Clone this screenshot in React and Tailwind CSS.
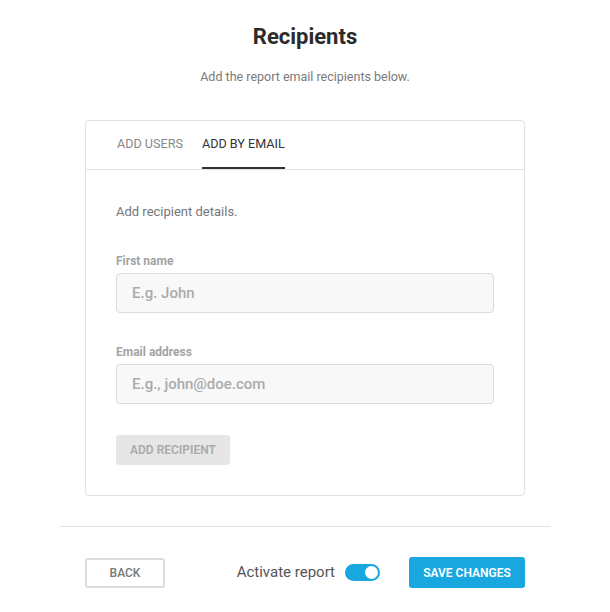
import { useState } from "react";

function Field({ label, placeholder }) {
  return (
    <div className="flex flex-col">
      <label className="text-[12px] font-bold text-[#a3a3a3] leading-none mb-[6px]">{label}</label>
      <input
        className="h-[40px] w-full rounded-[4px] border border-[#dcdcdc] bg-[#f8f8f8] px-[15px] text-[15px] font-medium text-[#555] placeholder-[#ababab] outline-none"
        placeholder={placeholder}
      />
    </div>
  );
}

export default function App() {
  const [tab, setTab] = useState("email");
  const [active, setActive] = useState(true);

  return (
    <div className="w-[610px] min-h-[612px] bg-white font-['Roboto',sans-serif] flex flex-col items-center pt-[24px]">
      <h1 className="text-[22px] font-bold text-[#2b2b2b] leading-[26px]">Recipients</h1>
      <p className="mt-[19px] text-[12.5px] text-[#7a7a7a] leading-[16px]">Add the report email recipients below.</p>

      <div className="mt-[35px] w-[440px] rounded-[4px] border border-[#e0e0e0]">
        <div className="flex gap-[19px] px-[31px] border-b border-[#e3e3e3] h-[49px]">
          <button
            onClick={() => setTab("users")}
            className={`h-full text-[12.6px] uppercase border-b-2 ${tab === "users" ? "border-[#333] text-[#333]" : "border-transparent text-[#8a8a8a]"}`}
          >
            Add users
          </button>
          <button
            onClick={() => setTab("email")}
            className={`h-full text-[12.6px] uppercase border-b-2 ${tab === "email" ? "border-[#333] text-[#333]" : "border-transparent text-[#8a8a8a]"}`}
          >
            Add by email
          </button>
        </div>

        <div className="px-[30px] pt-[34px] pb-[30px]">
          <p className="text-[13px] text-[#777] leading-[16px]">Add recipient details.</p>
          <div className="mt-[35px] flex flex-col gap-[33px]">
            <Field label="First name" placeholder="E.g. John" />
            <Field label="Email address" placeholder="E.g., john@doe.com" />
          </div>
          <button className="mt-[31px] h-[30px] px-[14px] rounded-[3px] bg-[#e6e6e6] text-[12px] font-semibold text-[#aaa] uppercase">
            Add recipient
          </button>
        </div>
      </div>

      <div className="mt-[30px] w-[491px] border-t border-[#e3e3e3]" />

      <div className="mt-[30px] w-[440px] flex items-center justify-between">
        <button className="h-[30px] w-[80px] rounded-[3px] border-2 border-[#dcdcdc] text-[12px] font-medium text-[#777] uppercase">
          Back
        </button>
        <div className="flex items-center">
          <span className="text-[15px] text-[#555]">Activate report</span>
          <button
            onClick={() => setActive(!active)}
            className={`ml-[10px] w-[35px] h-[17px] rounded-full flex items-center px-[2px] ${active ? "bg-[#19a7e0] justify-end" : "bg-[#ccc] justify-start"}`}
          >
            <span className="w-[13px] h-[13px] rounded-full bg-white" />
          </button>
          <button className="ml-[29px] h-[31px] w-[116px] rounded-[3px] bg-[#19a7e0] text-[12px] font-semibold text-white uppercase">
            Save changes
          </button>
        </div>
      </div>
    </div>
  );
}
